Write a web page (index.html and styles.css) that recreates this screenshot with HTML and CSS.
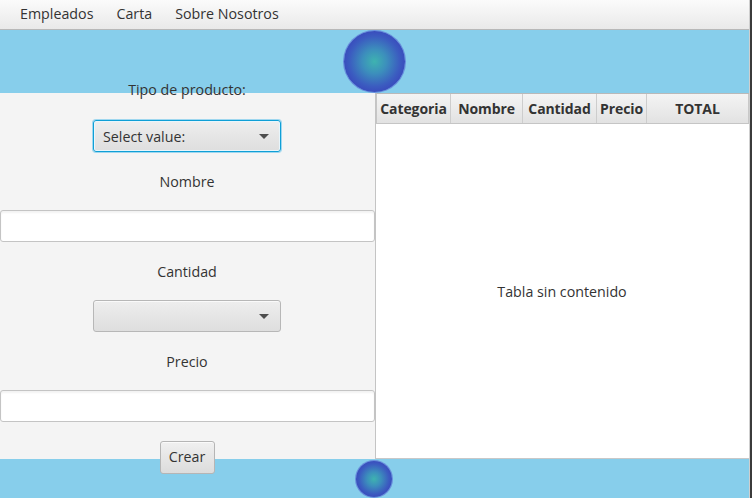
FILE: index.html
```html
<!DOCTYPE html>
<html lang="es">
<head>
<meta charset="utf-8">
<title>Productos</title>
<link rel="stylesheet" href="styles.css">
</head>
<body>
<div class="window">
  <div class="app">
    <nav class="menubar">
      <span class="menu-item">Empleados</span>
      <span class="menu-item">Carta</span>
      <span class="menu-item">Sobre Nosotros</span>
    </nav>
    <header class="band band-top">
      <div class="sphere sphere-big"></div>
    </header>
    <main class="content">
      <section class="form">
        <div class="label label-first">Tipo de producto:</div>
        <div class="combo combo-focused">
          <span class="combo-text">Select value:</span>
          <span class="arrow"></span>
        </div>
        <div class="label">Nombre</div>
        <div class="field"></div>
        <div class="label">Cantidad</div>
        <div class="combo">
          <span class="combo-text"></span>
          <span class="arrow"></span>
        </div>
        <div class="label">Precio</div>
        <div class="field"></div>
        <button class="btn">Crear</button>
      </section>
      <section class="table">
        <div class="thead">
          <div class="th th-cat">Categoria</div>
          <div class="th th-nom">Nombre</div>
          <div class="th th-can">Cantidad</div>
          <div class="th th-pre">Precio</div>
          <div class="th th-tot">TOTAL</div>
        </div>
        <div class="tbody">Tabla sin contenido</div>
      </section>
    </main>
    <footer class="band band-bottom">
      <div class="sphere sphere-small"></div>
    </footer>
  </div>
  <div class="frame-edge"></div>
</div>
</body>
</html>
```
FILE: styles.css
```css
* { box-sizing: border-box; }
html, body { margin: 0; padding: 0; }
body {
  width: 752px;
  height: 498px;
  overflow: hidden;
  font-family: "Open Sans", "Noto Sans", sans-serif;
  font-size: 14.25px;
  color: #333333;
  background: #f4f4f4;
}
.window {
  display: flex;
  width: 752px;
  height: 498px;
}
.app {
  width: 749px;
  height: 498px;
  display: flex;
  flex-direction: column;
}
.frame-edge {
  width: 3px;
  background: #3b3b3b;
  border-left: 1px solid #cfcfcf;
}
.menubar {
  height: 30px;
  flex: none;
  display: flex;
  align-items: center;
  padding-left: 20px;
  gap: 23px;
  background: linear-gradient(#fbfbfb, #e9e9e9);
  border-bottom: 1px solid #b8b8b8;
}
.menu-item { line-height: 18px; padding-bottom: 2px; }
.band {
  background: #87ceeb;
  display: flex;
  justify-content: center;
  align-items: center;
  flex: none;
}
.band-top { height: 63px; }
.band-bottom { height: 39px; }
.sphere {
  border-radius: 50%;
  background: radial-gradient(circle at 50% 50%, #3eb3b0 0%, #3c8fbc 28%, #3b5cc0 58%, #3838b9 88%, #4848c4 100%);
  box-shadow: 0 0 0 1px rgba(80, 90, 210, 0.55);
}
.sphere-big { width: 61px; height: 61px; }
.sphere-small { width: 36px; height: 36px; margin-left: -1px; }
.content {
  height: 366px;
  flex: none;
  display: flex;
}
.form {
  width: 376px;
  flex: none;
  background: #f4f4f4;
  border-right: 1px solid #c4c4c4;
  display: flex;
  flex-direction: column;
  align-items: center;
  gap: 20px;
  padding-right: 1px;
  position: relative;
  z-index: 1;
}
.label {
  height: 18px;
  line-height: 18px;
  padding-top: 1px;
}
.label-first { margin-top: -13px; margin-bottom: 2px; }
.combo {
  width: 188px;
  height: 32px;
  flex: none;
  border: 1px solid #b7b7b7;
  border-radius: 3px;
  background: linear-gradient(#eeeeee, #dedede);
  display: flex;
  align-items: center;
  padding: 0 10px 0 9px;
  box-shadow: inset 0 1px 0 rgba(255,255,255,0.7);
}
.combo-focused {
  border: 1px solid #0f9fd6;
  box-shadow: 0 0 0 1px #9fd7ef, inset 0 0 0 1px #e8f6fc;
}
.combo-text { flex: 1; }
.arrow {
  width: 0;
  height: 0;
  border-left: 5px solid transparent;
  border-right: 5px solid transparent;
  border-top: 5px solid #4d4d4d;
  margin-right: 1px;
}
.field {
  width: 375px;
  height: 32px;
  flex: none;
  background: #ffffff;
  border: 1px solid #c4c4c4;
  border-radius: 3px;
  box-shadow: inset 0 2px 2px rgba(0,0,0,0.05);
  align-self: flex-start;
}
.btn {
  width: 55px;
  height: 33px;
  flex: none;
  font-family: inherit;
  font-size: inherit;
  line-height: 18px;
  color: #333333;
  border: 1px solid #b5b5b5;
  border-radius: 3px;
  background: linear-gradient(#f0f0f0, #dcdcdc);
  box-shadow: inset 0 1px 0 #fafafa;
  padding: 0 0 1px 0;
  margin-top: -1px;
}
.table {
  flex: 1;
  display: flex;
  flex-direction: column;
  background: #ffffff;
  border-bottom: 1px solid #c8c8c8;
}
.thead {
  height: 31px;
  display: flex;
  background: linear-gradient(#f4f4f4, #e2e2e2);
  border-top: 1px solid #b9b9b9;
  border-bottom: 1px solid #c5c5c5;
  border-left: 1px solid #c5c5c5;
}
.th {
  font-weight: 700;
  font-size: 14px;
  display: flex;
  align-items: center;
  justify-content: center;
  border-right: 1px solid #cdcdcd;
  letter-spacing: -0.1px;
}
.th-cat { width: 74px; }
.th-nom { width: 72px; }
.th-can { width: 74px; }
.th-pre { width: 50px; }
.th-tot { flex: 1; border-right: 1px solid #c8c8c8; }
.tbody {
  flex: 1;
  display: flex;
  align-items: center;
  justify-content: center;
  padding-right: 1px;
}
```
